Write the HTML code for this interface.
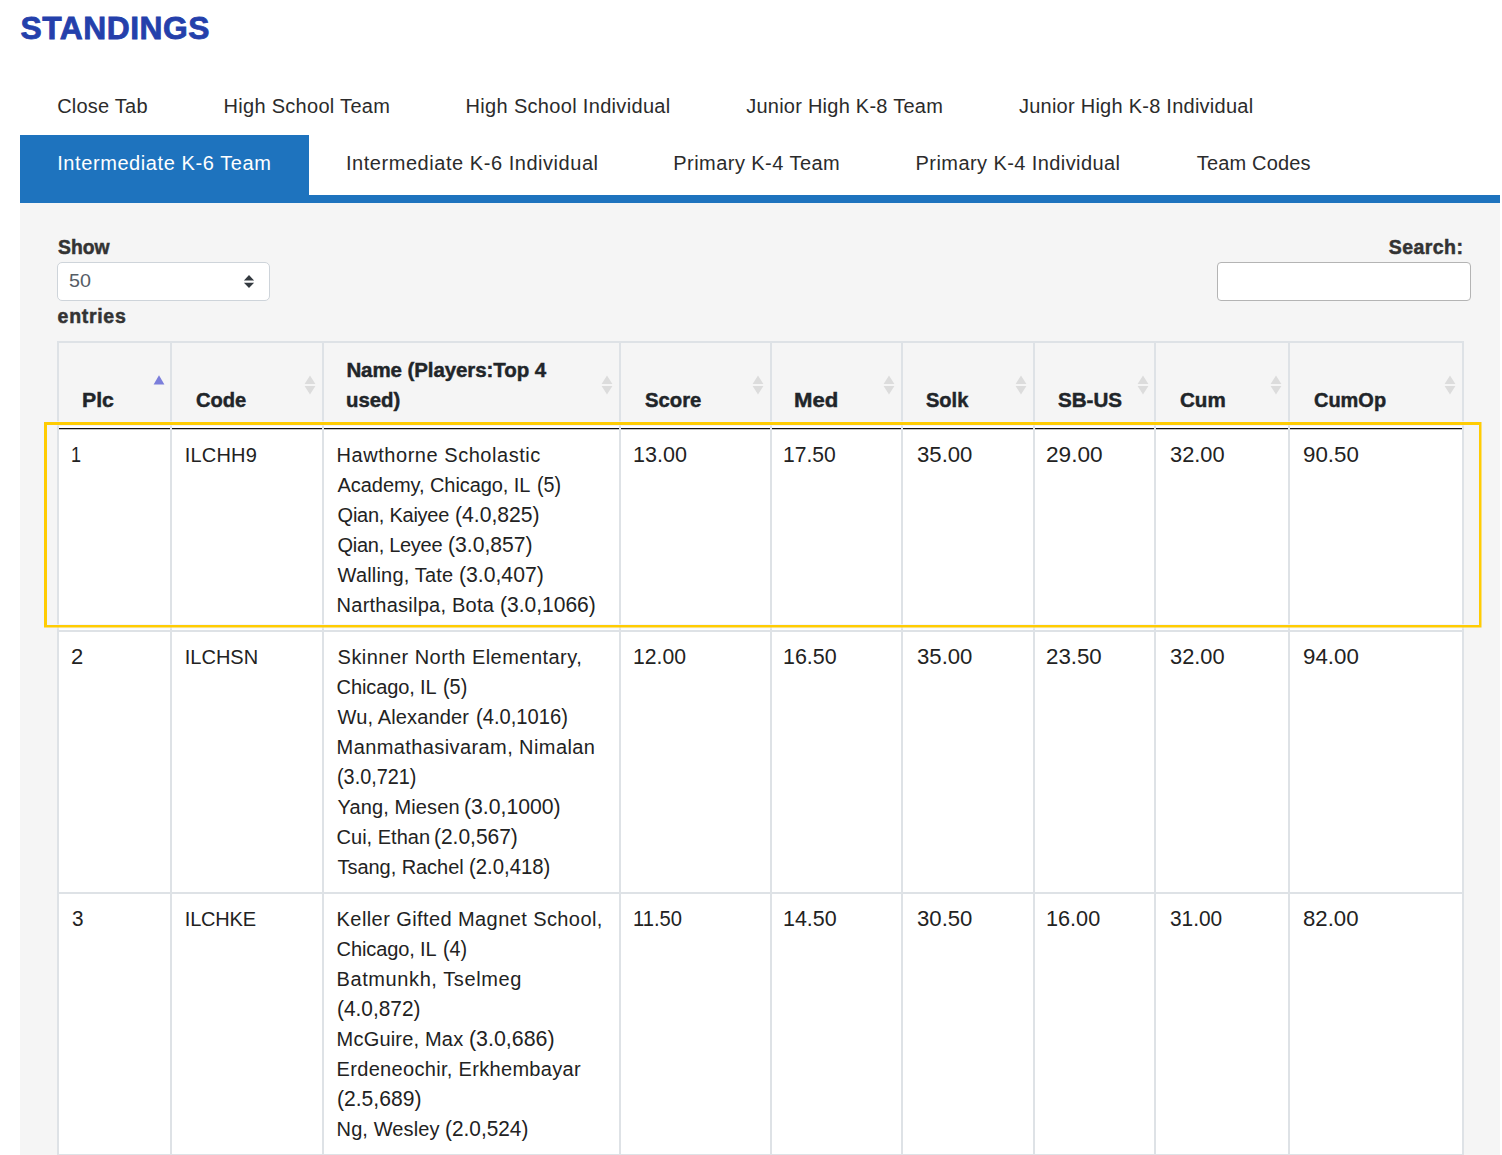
<!DOCTYPE html>
<html><head><meta charset="utf-8"><title>Standings</title>
<style>
html,body{margin:0;padding:0;background:#fff}
body{width:1502px;height:1155px;position:relative;overflow:hidden;font-family:"Liberation Sans",sans-serif}
.r{position:absolute;display:block}
.x{position:absolute;white-space:nowrap;line-height:30px;height:30px;display:block;transform-origin:0 22px}
.n{font-size:20px;font-weight:400;color:#222}
.b{font-size:20.5px;font-weight:700;color:#212529;-webkit-text-stroke:0.45px #212529}
.t{font-size:20px;font-weight:400;color:#2b2b2b}
.ta{font-size:20px;font-weight:400;color:#fff}
.l{font-size:19.5px;font-weight:700;color:#333;-webkit-text-stroke:0.5px #333}
.h1{font-size:31.8px;font-weight:700;color:#2440ab;-webkit-text-stroke:0.8px #2440ab}
.s{font-size:18px;font-weight:400;color:#555d66}

</style></head><body>
<div class="r" style="left:20px;top:135px;width:289px;height:60px;background:#1e73be;"></div>
<div class="r" style="left:20px;top:195px;width:1480px;height:8px;background:#1e73be;"></div>
<div class="r" style="left:20px;top:203px;width:1480px;height:952px;background:#f5f5f5;"></div>
<div class="r" style="left:57px;top:262px;width:213px;height:39px;box-sizing:border-box;background:#fff;border:1px solid #ced4da;border-radius:5px"></div>
<div class="r" style="left:1217px;top:262px;width:254px;height:39px;box-sizing:border-box;background:#fff;border:1px solid #b4b4b4;border-radius:4px"></div>
<svg class="r" style="left:243px;top:274px" width="12" height="15" viewBox="0 0 12 15"><path d="M0.9 6.6 L6 1 L11.1 6.6 Z M0.9 8.7 L6 14.1 L11.1 8.7 Z" fill="#343a40"/></svg>
<div class="r" style="left:59px;top:426px;width:1403px;height:204px;background:#fff;"></div>
<div class="r" style="left:59px;top:632px;width:1403px;height:260px;background:#fff;"></div>
<div class="r" style="left:59px;top:894px;width:1403px;height:260px;background:#fff;"></div>
<div class="r" style="left:58px;top:428px;width:1405px;height:1px;background:#111;"></div>
<div class="r" style="left:58px;top:429px;width:1405px;height:1px;background:rgba(17,17,17,0.25);"></div>
<div class="r" style="left:59px;top:630px;width:1403px;height:2px;background:#dee2e6;"></div>
<div class="r" style="left:59px;top:892px;width:1403px;height:2px;background:#dee2e6;"></div>
<div class="r" style="left:59px;top:1154px;width:1403px;height:2px;background:#dee2e6;"></div>
<div class="r" style="left:57px;top:341px;width:1407px;height:2px;background:#dee2e6;"></div>
<div class="r" style="left:57px;top:341px;width:2px;height:814px;background:#dee2e6;"></div>
<div class="r" style="left:1462px;top:341px;width:2px;height:814px;background:#dee2e6;"></div>
<div class="r" style="left:170px;top:343px;width:2px;height:812px;background:#dee2e6;"></div>
<div class="r" style="left:322px;top:343px;width:2px;height:812px;background:#dee2e6;"></div>
<div class="r" style="left:619px;top:343px;width:2px;height:812px;background:#dee2e6;"></div>
<div class="r" style="left:770px;top:343px;width:2px;height:812px;background:#dee2e6;"></div>
<div class="r" style="left:901px;top:343px;width:2px;height:812px;background:#dee2e6;"></div>
<div class="r" style="left:1033px;top:343px;width:2px;height:812px;background:#dee2e6;"></div>
<div class="r" style="left:1154px;top:343px;width:2px;height:812px;background:#dee2e6;"></div>
<div class="r" style="left:1288px;top:343px;width:2px;height:812px;background:#dee2e6;"></div>
<svg class="r" style="left:153px;top:375px" width="12" height="10" viewBox="0 0 12 10"><path d="M0.6 9.5 L6 0.2 L11.4 9.5 Z" fill="#7b7edb"/></svg>
<svg class="r" style="left:304px;top:375px" width="12" height="20" viewBox="0 0 12 20"><path d="M0.6 9 L6 0.5 L11.4 9 Z M0.6 11 L6 19.5 L11.4 11 Z" fill="#dcdcdc"/></svg>
<svg class="r" style="left:601px;top:375px" width="12" height="20" viewBox="0 0 12 20"><path d="M0.6 9 L6 0.5 L11.4 9 Z M0.6 11 L6 19.5 L11.4 11 Z" fill="#dcdcdc"/></svg>
<svg class="r" style="left:752px;top:375px" width="12" height="20" viewBox="0 0 12 20"><path d="M0.6 9 L6 0.5 L11.4 9 Z M0.6 11 L6 19.5 L11.4 11 Z" fill="#dcdcdc"/></svg>
<svg class="r" style="left:883px;top:375px" width="12" height="20" viewBox="0 0 12 20"><path d="M0.6 9 L6 0.5 L11.4 9 Z M0.6 11 L6 19.5 L11.4 11 Z" fill="#dcdcdc"/></svg>
<svg class="r" style="left:1015px;top:375px" width="12" height="20" viewBox="0 0 12 20"><path d="M0.6 9 L6 0.5 L11.4 9 Z M0.6 11 L6 19.5 L11.4 11 Z" fill="#dcdcdc"/></svg>
<svg class="r" style="left:1137px;top:375px" width="12" height="20" viewBox="0 0 12 20"><path d="M0.6 9 L6 0.5 L11.4 9 Z M0.6 11 L6 19.5 L11.4 11 Z" fill="#dcdcdc"/></svg>
<svg class="r" style="left:1270px;top:375px" width="12" height="20" viewBox="0 0 12 20"><path d="M0.6 9 L6 0.5 L11.4 9 Z M0.6 11 L6 19.5 L11.4 11 Z" fill="#dcdcdc"/></svg>
<svg class="r" style="left:1444px;top:375px" width="12" height="20" viewBox="0 0 12 20"><path d="M0.6 9 L6 0.5 L11.4 9 Z M0.6 11 L6 19.5 L11.4 11 Z" fill="#dcdcdc"/></svg>
<svg class="r" style="left:40px;top:418px" width="1450" height="216" viewBox="40 418 1450 216"><rect x="43.5" y="421.5" width="1438.5" height="206.5" fill="none" stroke="rgba(238,242,255,0.75)" stroke-width="1"/><rect x="47" y="425" width="1431.5" height="199.5" fill="none" stroke="rgba(238,242,255,0.75)" stroke-width="1"/><path fill-rule="evenodd" fill="#ffcc03" d="M44 422H1481.5V627.5H44Z M47 425V625H1479V425Z"/></svg>
<span class="x h1" style="left:20.60px;top:13.38px;letter-spacing:0.489px">STANDINGS</span>
<span class="x t" style="left:57.20px;top:91.07px;letter-spacing:0.223px">Close Tab</span>
<span class="x t" style="left:223.50px;top:91.07px;letter-spacing:0.297px">High School Team</span>
<span class="x t" style="left:465.60px;top:91.07px;letter-spacing:0.321px">High School Individual</span>
<span class="x t" style="left:746.20px;top:91.07px;letter-spacing:0.245px">Junior High K-8 Team</span>
<span class="x t" style="left:1018.90px;top:91.07px;letter-spacing:0.254px">Junior High K-8 Individual</span>
<span class="x ta" style="left:57.20px;top:148.07px;letter-spacing:0.587px">Intermediate K-6 Team</span>
<span class="x t" style="left:346.00px;top:148.07px;letter-spacing:0.544px">Intermediate K-6 Individual</span>
<span class="x t" style="left:673.30px;top:148.07px;letter-spacing:0.449px">Primary K-4 Team</span>
<span class="x t" style="left:915.60px;top:148.07px;letter-spacing:0.420px">Primary K-4 Individual</span>
<span class="x t" style="left:1196.80px;top:148.07px;letter-spacing:0.158px">Team Codes</span>
<span class="x l" style="left:57.60px;top:232.25px;transform:scale(0.9900,1.000)">Show</span>
<span class="x l" style="left:57.60px;top:301.25px;letter-spacing:0.700px">entries</span>
<span class="x l" style="left:1388.80px;top:232.25px;letter-spacing:0.426px">Search:</span>
<span class="x s" style="left:68.60px;top:265.76px;transform:scale(1.0944,1.000)">50</span>
<span class="x b" style="left:81.56px;top:384.90px;transform:scale(1.0385,1.000)">Plc</span>
<span class="x b" style="left:196.00px;top:384.90px;transform:scale(0.9813,1.000)">Code</span>
<span class="x b" style="left:346.40px;top:354.90px;letter-spacing:-0.088px">Name (Players:Top 4</span>
<span class="x b" style="left:346.41px;top:384.90px;transform:scale(0.9934,1.000)">used)</span>
<span class="x b" style="left:644.70px;top:384.90px;transform:scale(0.9898,1.000)">Score</span>
<span class="x b" style="left:794.22px;top:384.90px;transform:scale(1.0791,1.000)">Med</span>
<span class="x b" style="left:926.30px;top:384.90px;transform:scale(0.9774,1.000)">Solk</span>
<span class="x b" style="left:1058.20px;top:384.90px;transform:scale(1.0046,1.000)">SB-US</span>
<span class="x b" style="left:1179.90px;top:384.90px;transform:scale(1.0039,1.000)">Cum</span>
<span class="x b" style="left:1313.90px;top:384.90px;transform:scale(0.9741,1.000)">CumOp</span>
<span class="x n" style="left:70.70px;top:440.07px;transform:scale(0.9000,1.060)">1</span>
<span class="x n" style="left:184.80px;top:440.07px;letter-spacing:0.178px">ILCHH9</span>
<span class="x n" style="left:336.60px;top:440.07px;letter-spacing:0.541px">Hawthorne Scholastic</span>
<span class="x n" style="left:337.60px;top:470.07px;letter-spacing:-0.071px">Academy, Chicago, IL</span>
<span class="x n" style="left:537.32px;top:470.07px;transform:scale(0.9832,1.060)">(5)</span>
<span class="x n" style="left:337.60px;top:500.07px;letter-spacing:-0.254px">Qian, Kaiyee</span>
<span class="x n" style="left:454.74px;top:500.07px;transform:scale(1.0576,1.060)">(4.0,825)</span>
<span class="x n" style="left:337.60px;top:530.07px;letter-spacing:-0.293px">Qian, Leyee</span>
<span class="x n" style="left:448.14px;top:530.07px;transform:scale(1.0563,1.060)">(3.0,857)</span>
<span class="x n" style="left:337.60px;top:560.07px;letter-spacing:0.181px">Walling, Tate</span>
<span class="x n" style="left:459.14px;top:560.07px;transform:scale(1.0588,1.060)">(3.0,407)</span>
<span class="x n" style="left:336.60px;top:590.07px;letter-spacing:0.244px">Narthasilpa, Bota</span>
<span class="x n" style="left:500.35px;top:590.07px;transform:scale(1.0501,1.060)">(3.0,1066)</span>
<span class="x n" style="left:632.52px;top:440.07px;transform:scale(1.0771,1.060)">13.00</span>
<span class="x n" style="left:783.15px;top:440.07px;transform:scale(1.0547,1.060)">17.50</span>
<span class="x n" style="left:916.70px;top:440.07px;transform:scale(1.1076,1.060)">35.00</span>
<span class="x n" style="left:1046.27px;top:440.07px;transform:scale(1.1323,1.060)">29.00</span>
<span class="x n" style="left:1169.60px;top:440.07px;transform:scale(1.0916,1.060)">32.00</span>
<span class="x n" style="left:1303.20px;top:440.07px;transform:scale(1.1157,1.060)">90.50</span>
<span class="x n" style="left:70.50px;top:642.07px;transform:scale(1.1000,1.060)">2</span>
<span class="x n" style="left:184.80px;top:642.07px;letter-spacing:-0.001px">ILCHSN</span>
<span class="x n" style="left:337.60px;top:642.07px;letter-spacing:0.463px">Skinner North Elementary,</span>
<span class="x n" style="left:336.60px;top:672.07px;letter-spacing:-0.115px">Chicago, IL</span>
<span class="x n" style="left:442.81px;top:672.07px;transform:scale(0.9920,1.060)">(5)</span>
<span class="x n" style="left:337.60px;top:702.07px;letter-spacing:0.137px">Wu, Alexander</span>
<span class="x n" style="left:475.79px;top:702.07px;transform:scale(1.0077,1.060)">(4.0,1016)</span>
<span class="x n" style="left:336.60px;top:732.07px;letter-spacing:0.406px">Manmathasivaram, Nimalan</span>
<span class="x n" style="left:336.61px;top:762.07px;transform:scale(0.9912,1.060)">(3.0,721)</span>
<span class="x n" style="left:337.60px;top:792.07px;letter-spacing:0.101px">Yang, Miesen</span>
<span class="x n" style="left:464.14px;top:792.07px;transform:scale(1.0591,1.060)">(3.0,1000)</span>
<span class="x n" style="left:336.60px;top:822.07px;letter-spacing:0.004px">Cui, Ethan</span>
<span class="x n" style="left:434.45px;top:822.07px;transform:scale(1.0473,1.060)">(2.0,567)</span>
<span class="x n" style="left:337.60px;top:852.07px;letter-spacing:-0.058px">Tsang, Rachel</span>
<span class="x n" style="left:468.78px;top:852.07px;transform:scale(1.0155,1.060)">(2.0,418)</span>
<span class="x n" style="left:632.54px;top:642.07px;transform:scale(1.0587,1.060)">12.00</span>
<span class="x n" style="left:783.13px;top:642.07px;transform:scale(1.0731,1.060)">16.50</span>
<span class="x n" style="left:916.70px;top:642.07px;transform:scale(1.1076,1.060)">35.00</span>
<span class="x n" style="left:1046.29px;top:642.07px;transform:scale(1.1139,1.060)">23.50</span>
<span class="x n" style="left:1169.60px;top:642.07px;transform:scale(1.0916,1.060)">32.00</span>
<span class="x n" style="left:1303.20px;top:642.07px;transform:scale(1.1157,1.060)">94.00</span>
<span class="x n" style="left:71.60px;top:904.07px;transform:scale(1.0364,1.060)">3</span>
<span class="x n" style="left:184.80px;top:904.07px;letter-spacing:-0.201px">ILCHKE</span>
<span class="x n" style="left:336.60px;top:904.07px;letter-spacing:0.414px">Keller Gifted Magnet School,</span>
<span class="x n" style="left:336.60px;top:934.07px;letter-spacing:-0.115px">Chicago, IL</span>
<span class="x n" style="left:442.81px;top:934.07px;transform:scale(0.9876,1.060)">(4)</span>
<span class="x n" style="left:336.60px;top:964.07px;letter-spacing:0.587px">Batmunkh, Tselmeg</span>
<span class="x n" style="left:336.56px;top:994.07px;transform:scale(1.0422,1.060)">(4.0,872)</span>
<span class="x n" style="left:336.60px;top:1024.07px;letter-spacing:0.194px">McGuire, Max</span>
<span class="x n" style="left:468.73px;top:1024.07px;transform:scale(1.0690,1.060)">(3.0,686)</span>
<span class="x n" style="left:336.60px;top:1054.07px;letter-spacing:0.316px">Erdeneochir, Erkhembayar</span>
<span class="x n" style="left:336.55px;top:1084.07px;transform:scale(1.0550,1.060)">(2.5,689)</span>
<span class="x n" style="left:336.60px;top:1114.07px;letter-spacing:0.102px">Ng, Wesley</span>
<span class="x n" style="left:444.76px;top:1114.07px;transform:scale(1.0410,1.060)">(2.0,524)</span>
<span class="x n" style="left:632.59px;top:904.07px;transform:scale(1.0097,1.060)">11.50</span>
<span class="x n" style="left:783.13px;top:904.07px;transform:scale(1.0731,1.060)">14.50</span>
<span class="x n" style="left:916.70px;top:904.07px;transform:scale(1.1076,1.060)">30.50</span>
<span class="x n" style="left:1046.32px;top:904.07px;transform:scale(1.0833,1.060)">16.00</span>
<span class="x n" style="left:1169.60px;top:904.07px;transform:scale(1.0435,1.060)">31.00</span>
<span class="x n" style="left:1303.20px;top:904.07px;transform:scale(1.1096,1.060)">82.00</span>
</body></html>
